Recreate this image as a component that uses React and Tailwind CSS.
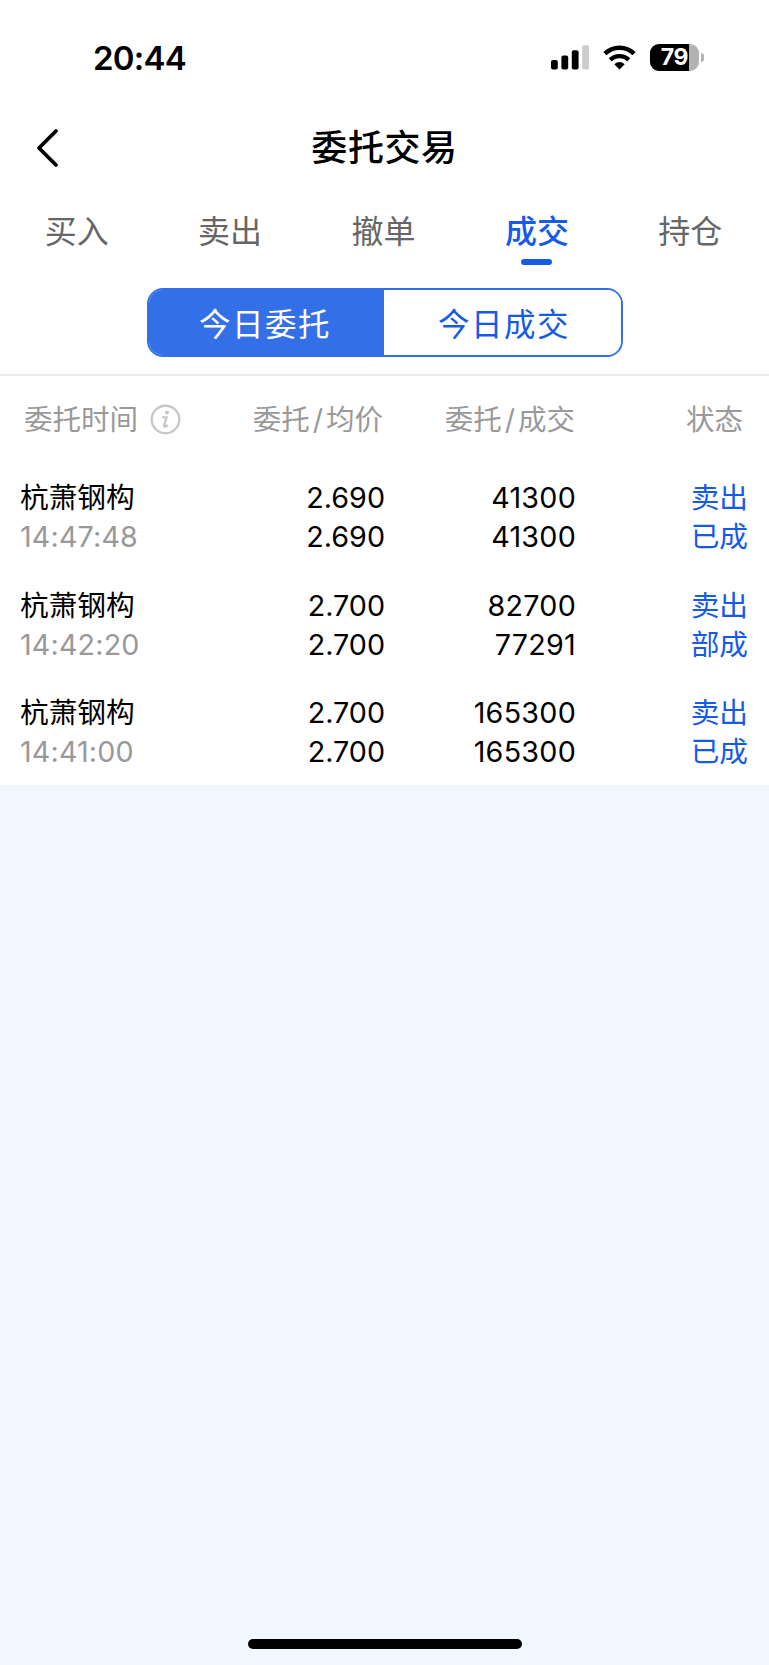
import React, { useState } from "react";
import clsx from "clsx";

const tabs = ["买入", "卖出", "撤单", "成交", "持仓"];
const segments = ["今日委托", "今日成交"];

const orders = [
  { name: "杭萧钢构", time: "14:47:48", price: "2.690", avgPrice: "2.690", amount: "41300", filled: "41300", side: "卖出", status: "已成" },
  { name: "杭萧钢构", time: "14:42:20", price: "2.700", avgPrice: "2.700", amount: "82700", filled: "77291", side: "卖出", status: "部成" },
  { name: "杭萧钢构", time: "14:41:00", price: "2.700", avgPrice: "2.700", amount: "165300", filled: "165300", side: "卖出", status: "已成" },
];

const StatusBar = () => (
  <div className="flex h-[114px] items-center justify-between pr-[65px] pl-[93px]">
    <span className="pt-px text-[33px] leading-[40px] font-semibold tracking-[-0.8px]">20:44</span>
    <div className="flex items-center">
      <svg width="38" height="25" viewBox="0 0 38 25">
        <rect x="0" y="15" width="6.8" height="9.5" rx="2" />
        <rect x="10.4" y="10.5" width="6.8" height="14" rx="2" />
        <rect x="20.8" y="5.2" width="6.8" height="19.3" rx="2" />
        <rect x="31.2" y="0.2" width="6.8" height="24.3" rx="2" fill="#cccccc" />
      </svg>
      <svg className="ml-[14px]" width="33" height="25" viewBox="0 0 33 25">
        <path d="M1.9 8.6A21 21 0 0 1 31.1 8.6" fill="none" stroke="#000" strokeWidth="4.6" />
        <path d="M7.3 14.9A13 13 0 0 1 25.7 14.9" fill="none" stroke="#000" strokeWidth="4.4" />
        <path d="M11.3 19.3Q16.5 14.6 21.7 19.3L16.5 24.5Z" />
      </svg>
      <div className="ml-[14px] flex items-center gap-[2px]">
        <div className="relative flex h-[27px] w-[49px] items-center justify-center overflow-hidden rounded-[9px] bg-[#b2b2b2]">
          <div className="absolute inset-y-0 left-0 w-[39px] bg-black" />
          <span className="relative pt-px text-[23px] leading-none font-bold tracking-[-0.4px] text-white">79</span>
        </div>
        <div className="h-[9px] w-[3px] rounded-r-full bg-[#b2b2b2]" />
      </div>
    </div>
  </div>
);

const InfoIcon = () => (
  <svg width="31" height="31" viewBox="0 0 31 31" fill="none" stroke="#c8c8c8">
    <circle cx="15.5" cy="15.5" r="13.8" strokeWidth="2.4" />
    <circle cx="17" cy="8.6" r="2" fill="#c8c8c8" stroke="none" />
    <path d="M12 13.4h4.6l-2.5 7.9q-.6 2.4 3.8.1" strokeWidth="2.4" />
  </svg>
);

const OrderRow = ({ order }) => (
  <div className="flex h-[107.5px] pt-[16px] pr-[21px] pl-[20px] text-[28.7px] leading-[39px]">
    <div className="w-[200px]">
      <p>{order.name}</p>
      <p className="tracking-[0.15px] text-[#999999]">{order.time}</p>
    </div>
    <div className="w-[165px] text-right">
      <p>{order.price}</p>
      <p>{order.avgPrice}</p>
    </div>
    <div className="w-[191px] text-right tracking-[0.25px]">
      <p>{order.amount}</p>
      <p>{order.filled}</p>
    </div>
    <div className="flex-1 text-right text-[#155be8]">
      <p>{order.side}</p>
      <p>{order.status}</p>
    </div>
  </div>
);

const App = () => {
  const [activeTab, setActiveTab] = useState(3);
  const [segment, setSegment] = useState(0);

  return (
    <div className="flex h-[1665px] w-[769px] flex-col bg-[#f2f6ff] font-[Inter,'Noto_Sans_CJK_SC',sans-serif] text-black">
      <div className="bg-white">
        <StatusBar />
        <header className="grid h-[68px] grid-cols-3 items-center">
          <button className="pl-[35px]" aria-label="返回">
            <svg width="26" height="42" viewBox="0 0 26 42" fill="none" stroke="#000" strokeWidth="3.8" strokeLinecap="round" strokeLinejoin="round">
              <path d="M21 4L4 21l17 17" />
            </svg>
          </button>
          <h1 className="text-center text-[36px] leading-[52px] font-medium tracking-[0.6px]">委托交易</h1>
        </header>

        <nav className="grid h-[106px] grid-cols-5 pt-[27px] pr-[2px]">
          {tabs.map((tab, i) => (
            <button
              key={tab}
              onClick={() => setActiveTab(i)}
              className={clsx(
                "flex flex-col items-center text-[32px] leading-[46px]",
                i === activeTab ? "font-medium text-[#155be8]" : "text-[#666666]"
              )}
            >
              {tab}
              {i === activeTab && <span className="mt-[4px] h-[6px] w-[31px] rounded-full bg-[#155be8]" />}
            </button>
          ))}
        </nav>

        <div className="flex h-[88px] justify-center border-b-2 border-[#ebebeb]">
          <div className="flex h-[69px] w-[476px] overflow-hidden rounded-[16px] border-2 border-[#3370e8]">
            {segments.map((item, i) => (
              <button
                key={item}
                onClick={() => setSegment(i)}
                className={clsx(
                  "flex-1 pt-[4px] text-[31.5px] leading-[46px] tracking-[1.5px]",
                  i === segment ? "bg-[#3370e8] pr-[2px] text-white" : "bg-white pl-[4px] text-[#155be8]"
                )}
              >
                {item}
              </button>
            ))}
          </div>
        </div>

        <div className="flex h-[86px] items-center pt-[3px] pr-[26px] pl-[24px] text-[28.5px] text-[#999999]">
          <div className="flex w-[200px] items-center gap-[12px]">
            委托时间
            <span className="pb-[3px]">
              <InfoIcon />
            </span>
          </div>
          <div className="w-[159px] text-right">
            委托<span className="mx-[3px]">/</span>均价
          </div>
          <div className="w-[192px] text-right">
            委托<span className="mx-[3px]">/</span>成交
          </div>
          <div className="flex-1 text-right">状态</div>
        </div>

        {orders.map((order) => (
          <OrderRow key={order.time} order={order} />
        ))}
      </div>

      <div className="mt-auto mb-[16px] h-[10px] w-[274px] self-center rounded-full bg-black" />
    </div>
  );
};

export default App;
